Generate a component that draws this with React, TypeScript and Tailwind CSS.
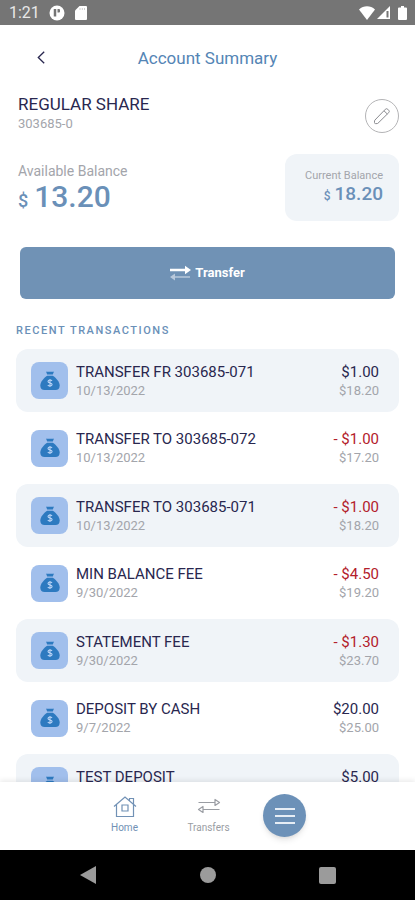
import clsx from 'clsx'

type Transaction = {
  title: string
  date: string
  amount: number
  balance: number
}

const transactions: Transaction[] = [
  { title: 'TRANSFER FR 303685-071', date: '10/13/2022', amount: 1, balance: 18.2 },
  { title: 'TRANSFER TO 303685-072', date: '10/13/2022', amount: -1, balance: 17.2 },
  { title: 'TRANSFER TO 303685-071', date: '10/13/2022', amount: -1, balance: 18.2 },
  { title: 'MIN BALANCE FEE', date: '9/30/2022', amount: -4.5, balance: 19.2 },
  { title: 'STATEMENT FEE', date: '9/30/2022', amount: -1.3, balance: 23.7 },
  { title: 'DEPOSIT BY CASH', date: '9/7/2022', amount: 20, balance: 25 },
  { title: 'TEST DEPOSIT', date: '9/7/2022', amount: 5, balance: 5 },
]

function formatAmount(value: number) {
  const text = `$${Math.abs(value).toFixed(2)}`
  return value < 0 ? `- ${text}` : text
}

function MoneyBag() {
  return (
    <svg width="20" height="20" viewBox="0 0 20 20" aria-hidden="true">
      <path d="M6 .6c1.300.5 2.600-.3 4 .2 1.400-.5 2.700.3 4-.2L12.800 3.400H7.200Z" fill="#2d7ac0" />
      <path d="M7.200 4.800h5.600c3 2 6.900 6 6.900 9.700 0 3-1.700 4.500-4.200 4.500H4.500C2 19 .3 17.500.3 14.500.3 10.800 4.200 6.800 7.200 4.800Z" fill="#2d7ac0" />
      <path d="M12 10c-.4-.8-1.100-1-2-1-1.100 0-2 .5-2 1.400 0 2.100 4.100 1 4.100 3.100 0 .9-.9 1.500-2.100 1.500-1 0-1.800-.4-2.200-1.100M10 7.900v8.200" fill="none" stroke="#b9d3f5" strokeWidth="1.100" />
    </svg>
  )
}

function StatusBar() {
  return (
    <div className="flex h-[25px] shrink-0 items-center justify-between bg-[#757575] pl-[9px] pr-2 text-white">
      <div className="flex items-center">
        <span className="w-10 text-base leading-6 text-[#e8e8e8]">1:21</span>
        <svg width="16" height="16" viewBox="0 0 16 16" aria-hidden="true">
          <circle cx="8" cy="8" r="7.500" fill="#fff" />
          <path d="M6 4v7.500" stroke="#757575" strokeWidth="2.500" />
          <path d="M8.500 4H10a1 1 0 0 1 1 1v1.500a1 1 0 0 1-1 1H8.500Z" fill="#757575" />
        </svg>
        <svg className="ml-2.5" width="12" height="14" viewBox="0 0 12 14" aria-hidden="true">
          <path d="M4.500 0H11a1 1 0 0 1 1 1v12a1 1 0 0 1-1 1H1a1 1 0 0 1-1-1V4.500Z" fill="#fff" />
          <path d="M5 2v2M7.300 2v2M9.500 2v2" stroke="#cfcfcf" />
        </svg>
      </div>
      <div className="flex items-center">
        <svg width="16" height="14" viewBox="0 0 16 14" aria-hidden="true">
          <path d="M0 3.500C4.500-.8 11.500-.8 16 3.500L8 14Z" fill="#fff" />
        </svg>
        <svg className="ml-0.5" width="13" height="13" viewBox="0 0 13 13" aria-hidden="true">
          <path d="M13 0v13H0Z" fill="#fff" />
          <path d="M10.500 5v6.500" stroke="#757575" strokeWidth="2" />
        </svg>
        <svg className="ml-2" width="9" height="14" viewBox="0 0 9 14" aria-hidden="true">
          <path d="M3 0h3v1.500h2a1 1 0 0 1 1 1V13a1 1 0 0 1-1 1H1a1 1 0 0 1-1-1V2.500a1 1 0 0 1 1-1h2Z" fill="#fff" />
        </svg>
      </div>
    </div>
  )
}

function TransactionRow({ item, striped }: { item: Transaction; striped: boolean }) {
  return (
    <li
      className={clsx(
        'flex items-center rounded-xl pl-[15px] pr-5',
        striped ? 'h-[63px] bg-[#f0f4f8]' : 'h-[72px]',
      )}
    >
      <div className="flex size-[37px] shrink-0 items-center justify-center rounded-lg bg-[#a1bfec]">
        <MoneyBag />
      </div>
      <div className="ml-2 flex-1">
        <p className="text-[15px] leading-5 text-[#29274f]">{item.title}</p>
        <p className="text-[13px] leading-[18px] text-[#a3a5ab]">{item.date}</p>
      </div>
      <div className="text-right">
        <p className={clsx('text-[15px] leading-5', item.amount < 0 ? 'text-[#b3202b]' : 'text-[#29274f]')}>
          {formatAmount(item.amount)}
        </p>
        <p className="text-[13px] leading-[18px] text-[#a3a5ab]">{formatAmount(item.balance)}</p>
      </div>
    </li>
  )
}

function BottomNav() {
  return (
    <nav className="relative flex h-[68px] shrink-0 items-start justify-center bg-white pt-3 pr-3.5 shadow-[0_-2px_5px_rgba(0,0,0,0.08)]">
      <a href="#home" className="flex w-[84px] flex-col items-center text-[#7191b5]">
        <svg width="24" height="24" viewBox="0 0 24 24" fill="none" stroke="currentColor" strokeWidth="1.200" aria-hidden="true">
          <path d="M1 12.500 12 3l11 9.500M3.500 10.500V22.500h17V10.500M16.500 6.500V4.500h4V10" />
          <path d="M9 11h6v6H9z" />
        </svg>
        <span className="mt-0.5 text-[10px] leading-4">Home</span>
      </a>
      <a href="#transfers" className="flex w-[84px] flex-col items-center text-[#9a9da3]">
        <svg width="24" height="24" viewBox="0 0 24 24" fill="none" stroke="currentColor" strokeWidth="1.200" strokeLinejoin="round" aria-hidden="true">
          <path d="M1.500 8.500H18M18 5.500v6l4.500-3ZM22.500 15.500H6M6 12.500v6l-4.500-3Z" />
        </svg>
        <span className="mt-0.5 text-[10px] leading-4">Transfers</span>
      </a>
      <div className="flex w-[68px] justify-center">
        <button
          type="button"
          aria-label="Menu"
          className="flex size-[43px] flex-col items-center justify-center gap-[5px] rounded-full bg-[#6c91b8] shadow-md"
        >
          <span className="h-0.5 w-5 bg-[#e6edf5]" />
          <span className="h-0.5 w-5 bg-[#e6edf5]" />
          <span className="h-0.5 w-5 bg-[#e6edf5]" />
        </button>
      </div>
    </nav>
  )
}

export default function App() {
  return (
    <div className="flex h-screen flex-col overflow-hidden bg-white font-[Roboto,sans-serif]">
      <StatusBar />

      <main className="min-h-0 flex-1 overflow-y-auto px-4 [scrollbar-width:none]">
        <header className="grid h-[65px] grid-cols-[50px_1fr_50px] items-center">
          <button type="button" aria-label="Back" className="flex justify-center text-[#29274f]">
            <svg width="8" height="13" viewBox="0 0 8 13" fill="none" stroke="currentColor" strokeWidth="1.300" aria-hidden="true">
              <path d="M7.200.8 1.300 6.500l5.900 5.700" />
            </svg>
          </button>
          <h1 className="text-center text-[17px] leading-6 text-[#5485b5]">Account Summary</h1>
        </header>

        <section className="flex items-center justify-between pl-0.5">
          <div className="pt-1">
            <h2 className="text-[17px] leading-5 text-[#29274f]">REGULAR SHARE</h2>
            <p className="text-[13px] leading-5 text-[#a3a5ab]">303685-0</p>
          </div>
          <button
            type="button"
            aria-label="Edit account name"
            className="mt-2 flex size-[34px] items-center justify-center rounded-full border border-[#b4b4b6] text-[#8a8b90]"
          >
            <svg width="18" height="18" viewBox="0 0 18 18" fill="none" stroke="currentColor" strokeLinejoin="round" aria-hidden="true">
              <path d="M1.800 13.200 12.300 2.300a1.800 1.800 0 0 1 2.500 0l.9.900a1.800 1.800 0 0 1 0 2.500L5 16.200a1.500 1.500 0 0 1-1 .4H2.500a1 1 0 0 1-1-1V14c0-.3.100-.6.3-.8ZM11 3.800 14.300 7" />
            </svg>
          </button>
        </section>

        <section className="mt-5 flex items-center justify-between pl-0.5">
          <div>
            <p className="text-[14px] leading-5 text-[#a3a5ab]">Available Balance</p>
            <p className="text-[30px] leading-8 font-medium text-[#6a90b8]">
              <span className="mr-1.5 text-lg">$</span>13.20
            </p>
          </div>
          <div className="h-[67px] rounded-xl bg-[#f0f4f8] pt-3.5 pr-4 pl-5 text-right">
            <p className="text-[11px] leading-4 text-[#a3a5ab]">Current Balance</p>
            <p className="text-[19px] leading-5 font-medium text-[#6a90b8]">
              <span className="mr-1 text-xs">$</span>18.20
            </p>
          </div>
        </section>

        <div className="px-1 pt-[26px]">
          <button
            type="button"
            className="flex h-[52px] w-full items-center justify-center gap-1 rounded-md bg-[#7092b5] text-[13px] font-bold text-white"
          >
            <svg width="21" height="16" viewBox="0 0 21 16" fill="none" aria-hidden="true">
              <path d="M0 5h16" stroke="#fff" strokeWidth="2.500" />
              <path d="M15 .8 21 5l-6 4.200Z" fill="#fff" />
              <path d="M20 12H4" stroke="#b9c9db" strokeWidth="1.500" />
              <path d="M5 8.500 0 12l5 3.500Z" fill="#b9c9db" />
            </svg>
            Transfer
          </button>
        </div>

        <h3 className="mt-6 text-[11px] leading-4 font-medium tracking-[0.14em] text-[#6a90b8]">RECENT TRANSACTIONS</h3>
        <ul className="mt-2.5">
          {transactions.map((item, i) => (
            <TransactionRow key={i} item={item} striped={i % 2 === 0} />
          ))}
        </ul>
      </main>

      <BottomNav />

      <div className="flex h-[50px] shrink-0 items-center justify-center gap-[103px] bg-black text-[#9b9b9b]">
        <button type="button" aria-label="System back">
          <svg width="17" height="18" viewBox="0 0 17 18" fill="currentColor" aria-hidden="true">
            <path d="M16 0v18L0 9Z" />
          </svg>
        </button>
        <button type="button" aria-label="System home" className="size-4 rounded-full bg-current" />
        <button type="button" aria-label="Recent apps" className="size-[17px] rounded-xs bg-current" />
      </div>
    </div>
  )
}
